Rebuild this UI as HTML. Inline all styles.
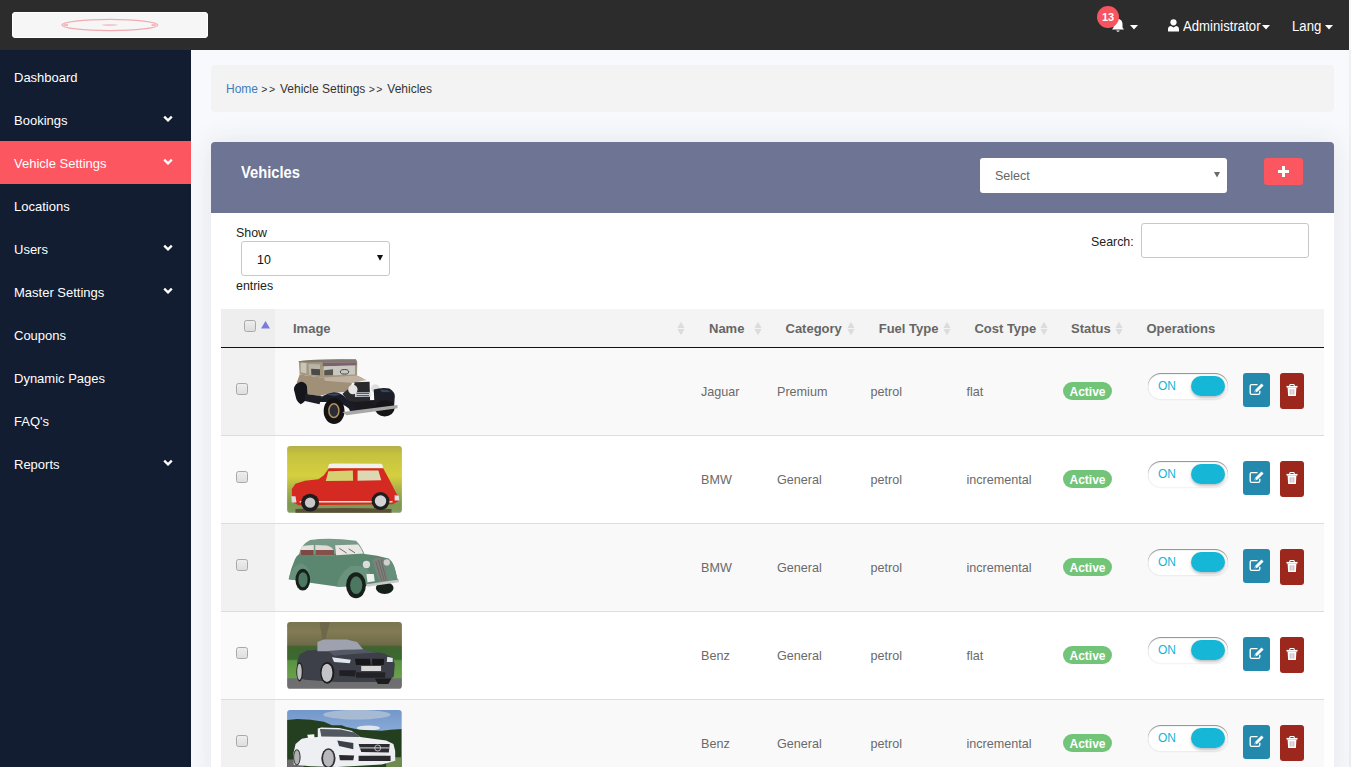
<!DOCTYPE html><html><head><meta charset="utf-8"><style>
*{box-sizing:border-box;margin:0;padding:0}
html,body{width:1351px;height:767px;overflow:hidden;background:#f8f9fc;font-family:"Liberation Sans",sans-serif}
body{position:relative}
.a{position:absolute}
.t{position:absolute;white-space:nowrap;line-height:1}
#strip{left:1349px;top:0;width:2px;height:767px;background:linear-gradient(#f9f9f9 0,#f9f9f9 50px,#eff0f4 50px,#eceef2 100%)}
#top{left:0;top:0;width:1349px;height:50px;background:#2c2c2c}
#logo{left:12px;top:12px;width:196px;height:26px;background:#f6f6f6;border-radius:4px;box-shadow:inset 0 0 0 1px #fff}
#side{left:0;top:50px;width:191px;height:717px;background:#131d31}
.mi{position:absolute;left:0;width:191px;height:43px;line-height:45px;color:#fff;font-size:13px;padding-left:14px;white-space:nowrap}
.mi.act{background:#fc5661}
.chev{position:absolute;left:163px;top:17px}
#crumb{left:211px;top:65px;width:1123px;height:47px;background:#f3f3f3;border-radius:4px}
#panel{left:211px;top:142px;width:1123px;height:640px;background:#fff;border-radius:4px 4px 0 0;box-shadow:0 0 28px rgba(40,50,90,.10)}
#ph{left:0;top:0;width:1123px;height:71px;background:#6e7494;border-radius:4px 4px 0 0}
.cb{position:absolute;width:12px;height:12px;border:1px solid #a8a8a8;border-radius:2.5px;background:linear-gradient(#ededed,#dedede)}
.sort{position:absolute;width:8px;height:15px}
.th{position:absolute;top:322px;font-size:13px;font-weight:bold;color:#666;white-space:nowrap;line-height:1}
.td{position:absolute;font-size:12.6px;color:#6a6a6a;white-space:nowrap;line-height:1}
.badge{position:absolute;left:1063px;width:49px;height:18px;border-radius:9px;background:#72c479;color:#fff;font-weight:bold;font-size:12px;line-height:20px;text-align:center}
.tog{position:absolute;left:1148px;width:80px;height:26px;border-radius:13px;background:#fff;box-shadow:inset 0 1px 1px rgba(0,0,0,.45),0 1px 2px rgba(0,0,0,.06)}
.tog .on{position:absolute;left:10px;top:7px;font-size:12px;color:#17b4d6;line-height:1}
.tog .knob{position:absolute;left:43px;top:3px;width:34px;height:20px;border-radius:10px;background:#15b6d6;box-shadow:0 2px 3px rgba(0,0,0,.25)}
.be{position:absolute;left:1243px;width:27px;height:34px;border-radius:3px;background:#2389ad}
.bd{position:absolute;left:1280px;width:24px;height:36px;border-radius:3px;background:#9c271d}
.img{position:absolute;left:287px;width:115px;height:67px;border-radius:3px;overflow:hidden}
</style></head><body><div id="strip" class="a"></div><div id="top" class="a"><div id="logo" class="a"><svg width="196" height="26" style="position:absolute;left:0;top:0"><ellipse cx="97.8" cy="13" rx="48" ry="5.6" fill="none" stroke="#f3aab0" stroke-width="1.2"/><path d="M50 13 Q52 11.5 56 12 L56 14 Q52 14.5 50 13Z M145.6 13 Q143.6 11.5 139.6 12 L139.6 14 Q143.6 14.5 145.6 13Z" fill="#f5b8bc"/><ellipse cx="97.8" cy="13" rx="8" ry="0.9" fill="#f6c8cc"/></svg></div><svg class="a" style="left:1111px;top:18px" width="14" height="15" viewBox="0 0 14 15"><path d="M7 1 C4 1 2.5 3.5 2.5 6 V9.5 L1 11.5 H13 L11.5 9.5 V6 C11.5 3.5 10 1 7 1Z M5.3 12.5 A1.8 1.8 0 0 0 8.7 12.5Z" fill="#fff"/></svg><div class="a" style="left:1097px;top:6px;width:22px;height:22px;border-radius:11px;background:#f7545f;color:#fff;font-size:11px;font-weight:bold;text-align:center;line-height:22px">13</div><svg class="a" style="left:1130px;top:25px" width="9" height="5"><path d="M0 0 H8 L4 4.5Z" fill="#fff"/></svg><svg class="a" style="left:1168px;top:18.5px" width="11" height="13" viewBox="0 0 11 13"><circle cx="5.5" cy="3.3" r="3.1" fill="#fff"/><path d="M0 12.5 V10 C0 8 1.5 7 3 7 L5.5 8.5 L8 7 C9.5 7 11 8 11 10 V12.5Z" fill="#fff"/></svg><div class="t" style="left:1183px;top:18.5px;font-size:14px;color:#fff;transform:scaleX(0.94);transform-origin:0 0">Administrator</div><svg class="a" style="left:1262px;top:25px" width="9" height="5"><path d="M0 0 H8 L4 4.5Z" fill="#fff"/></svg><div class="t" style="left:1292px;top:18.5px;font-size:14px;color:#fff;transform:scaleX(0.94);transform-origin:0 0">Lang</div><svg class="a" style="left:1325px;top:25px" width="9" height="5"><path d="M0 0 H8 L4 4.5Z" fill="#fff"/></svg></div><div id="side" class="a"><div class="mi" style="top:5px">Dashboard</div><div class="mi" style="top:48px">Bookings<svg class="chev" style="top:17px" width="10" height="8" viewBox="0 0 10 8"><path d="M1.2 1.6 L5 5.4 L8.8 1.6" fill="none" stroke="#fff" stroke-width="2.3"/></svg></div><div class="mi act" style="top:91px">Vehicle Settings<svg class="chev" style="top:17px" width="10" height="8" viewBox="0 0 10 8"><path d="M1.2 1.6 L5 5.4 L8.8 1.6" fill="none" stroke="#fff" stroke-width="2.3"/></svg></div><div class="mi" style="top:134px">Locations</div><div class="mi" style="top:177px">Users<svg class="chev" style="top:17px" width="10" height="8" viewBox="0 0 10 8"><path d="M1.2 1.6 L5 5.4 L8.8 1.6" fill="none" stroke="#fff" stroke-width="2.3"/></svg></div><div class="mi" style="top:220px">Master Settings<svg class="chev" style="top:17px" width="10" height="8" viewBox="0 0 10 8"><path d="M1.2 1.6 L5 5.4 L8.8 1.6" fill="none" stroke="#fff" stroke-width="2.3"/></svg></div><div class="mi" style="top:263px">Coupons</div><div class="mi" style="top:306px">Dynamic Pages</div><div class="mi" style="top:349px">FAQ's</div><div class="mi" style="top:392px">Reports<svg class="chev" style="top:17px" width="10" height="8" viewBox="0 0 10 8"><path d="M1.2 1.6 L5 5.4 L8.8 1.6" fill="none" stroke="#fff" stroke-width="2.3"/></svg></div></div><div id="crumb" class="a"></div><div class="t" style="left:226px;top:83px;font-size:12px;color:#333"><span style="color:#3f7cc0">Home</span> <span style="font-size:10.5px;letter-spacing:1.5px">&gt;&gt;</span> Vehicle Settings <span style="font-size:10.5px;letter-spacing:1.5px">&gt;&gt;</span> Vehicles</div><div id="panel" class="a"><div id="ph" class="a"></div></div><div class="t" style="left:241px;top:165px;font-size:16px;font-weight:bold;color:#fff;transform:scaleX(0.92);transform-origin:0 0">Vehicles</div><div class="a" style="left:980px;top:158px;width:247px;height:35px;background:#fff;border-radius:3px"></div><div class="t" style="left:995px;top:170px;font-size:12.5px;color:#666">Select</div><svg class="a" style="left:1214px;top:172px" width="6" height="6"><path d="M0 0H6L3 5.5Z" fill="#6a6a6a"/></svg><div class="a" style="left:1264px;top:158px;width:39px;height:27px;background:#fc5661;border-radius:3px"></div><svg class="a" style="left:1278px;top:166px" width="11" height="11"><path d="M4 0H7V4H11V7H7V11H4V7H0V4H4Z" fill="#fff"/></svg><div class="t" style="left:236px;top:227px;font-size:12.4px;color:#222">Show</div><div class="a" style="left:241px;top:241px;width:149px;height:35px;background:#fff;border:1px solid #c8c8c8;border-radius:3px"></div><div class="t" style="left:257px;top:254px;font-size:12.4px;color:#111">10</div><svg class="a" style="left:377px;top:255px" width="6" height="6"><path d="M0 0H6L3 5.8Z" fill="#111"/></svg><div class="t" style="left:236px;top:280px;font-size:12.4px;color:#222">entries</div><div class="t" style="left:1091px;top:236px;font-size:12.4px;color:#222">Search:</div><div class="a" style="left:1141px;top:223px;width:168px;height:35px;background:#fff;border:1px solid #c8c8c8;border-radius:3px"></div><div class="a" style="left:221px;top:309px;width:1103px;height:38px;background:#f4f4f4"></div><div class="a" style="left:221px;top:309px;width:54px;height:38px;background:#eeeeee"></div><div class="a" style="left:221px;top:347px;width:1103px;height:1px;background:#111"></div><div class="cb" style="left:244px;top:320px"></div><svg class="a" style="left:261px;top:321px" width="9" height="8"><path d="M4.5 0 L9 7.5 H0Z" fill="#7b7bde"/></svg><div class="th" style="left:293px">Image</div><div class="th" style="left:709px">Name</div><div class="th" style="left:785.5px">Category</div><div class="th" style="left:878.7px">Fuel Type</div><div class="th" style="left:974.4px">Cost Type</div><div class="th" style="left:1071px">Status</div><div class="th" style="left:1146.5px">Operations</div><svg class="sort" style="left:677px;top:321px" width="9" height="15" viewBox="0 0 9 15"><path d="M4.5 0 L8.5 7 H0.5Z M0.5 8 H8.5 L4.5 15Z" fill="#dcdcdc"/></svg><svg class="sort" style="left:753.5px;top:321px" width="9" height="15" viewBox="0 0 9 15"><path d="M4.5 0 L8.5 7 H0.5Z M0.5 8 H8.5 L4.5 15Z" fill="#dcdcdc"/></svg><svg class="sort" style="left:846.5px;top:321px" width="9" height="15" viewBox="0 0 9 15"><path d="M4.5 0 L8.5 7 H0.5Z M0.5 8 H8.5 L4.5 15Z" fill="#dcdcdc"/></svg><svg class="sort" style="left:942.5px;top:321px" width="9" height="15" viewBox="0 0 9 15"><path d="M4.5 0 L8.5 7 H0.5Z M0.5 8 H8.5 L4.5 15Z" fill="#dcdcdc"/></svg><svg class="sort" style="left:1039.5px;top:321px" width="9" height="15" viewBox="0 0 9 15"><path d="M4.5 0 L8.5 7 H0.5Z M0.5 8 H8.5 L4.5 15Z" fill="#dcdcdc"/></svg><svg class="sort" style="left:1114.5px;top:321px" width="9" height="15" viewBox="0 0 9 15"><path d="M4.5 0 L8.5 7 H0.5Z M0.5 8 H8.5 L4.5 15Z" fill="#dcdcdc"/></svg><div class="a" style="left:221px;top:348px;width:1103px;height:87px;background:#f9f9f9"></div><div class="a" style="left:221px;top:348px;width:54px;height:87px;background:#f1f1f1"></div><div class="a" style="left:221px;top:435px;width:1103px;height:1px;background:#dddddd"></div><div class="cb" style="left:236px;top:383px"></div><svg class="a" style="left:284px;top:352px" width="120" height="80.04" viewBox="0 0 1150 767" preserveAspectRatio="none"><path d="M120 300 L150 215 L360 245 L700 225 L760 255 L650 300 L620 380 L450 392 L340 422 L220 402 L200 300Z" fill="#a09078"/><path d="M380 232 L680 220 L792 268 L660 296 L390 276Z" fill="#c0b2a0"/><path d="M142 88 Q300 68 690 74 L702 100 L700 225 L360 246 L150 216Z" fill="#a4957f"/><path d="M140 88 Q300 64 690 70 L700 98 Q400 92 145 100Z" fill="#7d7a70"/><path d="M370 100 L695 100 L695 128 L372 140Z" fill="#7a6272"/><path d="M160 100 L215 105 L215 205 L160 195Z" fill="#c8c4b8"/><path d="M235 115 L345 120 L345 230 L240 220Z" fill="#b8b4a8"/><path d="M260 160 L345 165 L345 225 L262 218Z" fill="#4c4a46"/><path d="M380 136 L680 130 L680 215 L380 228Z" fill="#c8c8c0"/><path d="M385 175 L470 165 L470 222 L385 226Z" fill="#55544e"/><ellipse cx="580" cy="190" rx="40" ry="22" fill="none" stroke="#3a3a36" stroke-width="9"/><path d="M95 360 Q100 295 165 285 Q210 290 220 330 L225 420 Q210 480 160 500 Q120 480 110 420Z" fill="#15161c"/><path d="M200 400 L365 425 L340 500 L200 470Z" fill="#1e1f26"/><path d="M600 470 L880 460 L900 560 L640 590Z" fill="#1a1a1e"/><path d="M560 400 L640 335 L690 300 L690 480 L610 470Z" fill="#2a2a2e"/><path d="M330 480 Q360 400 480 385 Q560 390 600 450 L700 540 L650 565 Q600 520 560 500 Q470 470 400 480Z" fill="#1a1c28"/><path d="M410 410 Q470 390 540 400 Q520 420 470 420Z" fill="#3a4462"/><ellipse cx="480" cy="565" rx="100" ry="125" fill="#131313"/><ellipse cx="478" cy="562" rx="48" ry="66" fill="#2c2c34" stroke="#b09060" stroke-width="14"/><path d="M675 290 L820 285 L825 470 L680 480Z" fill="#2a2a2c"/><path d="M680 385 L830 385 L830 430 L680 432Z" fill="#d0d4dc"/><path d="M695 397 L815 397 M695 418 L815 418" stroke="#445" stroke-width="9"/><circle cx="660" cy="360" r="45" fill="#e4e4e4"/><circle cx="875" cy="350" r="40" fill="#dedede"/><path d="M860 360 Q940 335 1010 350 Q1060 380 1062 420 L1055 520 Q1000 600 930 590 L870 560Z" fill="#1c1e28"/><path d="M920 362 Q990 350 1030 385 Q980 380 940 385Z" fill="#3a4462"/><ellipse cx="965" cy="540" rx="95" ry="78" fill="#151515"/><path d="M560 575 L1088 508 L1088 540 L600 605Z" fill="#a8a8a8"/></svg><div class="td" style="left:701px;top:386px">Jaguar</div><div class="td" style="left:777px;top:386px">Premium</div><div class="td" style="left:870.5px;top:386px">petrol</div><div class="td" style="left:966.5px;top:386px">flat</div><div class="badge" style="top:382px">Active</div><div class="tog" style="top:373px"><span class="on">ON</span><div class="knob"></div></div><div class="be" style="top:373px"><svg class="a" style="left:6px;top:10px" width="16" height="13" viewBox="0 0 16 13"><path d="M8.5 1.6 H2.6 Q1.2 1.6 1.2 3 V9.9 Q1.2 11.3 2.6 11.3 H9.4 Q10.8 11.3 10.8 9.9 V7.8" fill="none" stroke="#fff" stroke-width="1.35"/><path d="M5.4 9.3 L6 6.9 L12.5 0.5 L14.6 2.5 L8.1 8.9Z" fill="#fff"/><circle cx="6.6" cy="8.1" r="0.7" fill="#2389ad"/></svg></div><div class="bd" style="top:373px"><svg class="a" style="left:6px;top:11px" width="12" height="13" viewBox="0 0 12 13"><path d="M3.8 2.2 V1.2 Q3.8 0.5 4.5 0.5 H7.5 Q8.2 0.5 8.2 1.2 V2.2" fill="none" stroke="#fff" stroke-width="1.1"/><rect x="0.5" y="1.9" width="11" height="1.7" fill="#fff"/><path d="M1.6 3.6 H10.4 L9.9 12 H2.1Z" fill="#fff"/><path d="M4.2 5.2 V10.6 M6 5.2 V10.6 M7.8 5.2 V10.6" stroke="#c4aeb8" stroke-width="1"/></svg></div><div class="a" style="left:221px;top:436px;width:1103px;height:87px;background:#ffffff"></div><div class="a" style="left:221px;top:436px;width:54px;height:87px;background:#fafafa"></div><div class="a" style="left:221px;top:523px;width:1103px;height:1px;background:#dddddd"></div><div class="cb" style="left:236px;top:471px"></div><svg class="a" style="left:284px;top:440px" width="120" height="80.04" viewBox="0 0 1150 767" preserveAspectRatio="none"><defs><linearGradient id="g2" x1="0" y1="0" x2="0" y2="1"><stop offset="0" stop-color="#a4a452"/><stop offset="0.18" stop-color="#c6c23e"/><stop offset="0.45" stop-color="#d6cf3e"/><stop offset="0.62" stop-color="#a8b04a"/><stop offset="0.8" stop-color="#7c9a52"/><stop offset="1" stop-color="#8c9a6c"/></linearGradient><clipPath id="c2"><rect x="30" y="58" width="1100" height="640" rx="30"/></clipPath></defs><g clip-path="url(#c2)"><rect x="0" y="0" width="1150" height="767" fill="url(#g2)"/><path d="M110 662 Q560 640 1030 662 L1030 767 L110 767Z" fill="#5a5038"/><path d="M430 232 Q440 225 480 225 L930 228 Q948 232 950 272 L420 272Z" fill="#f2f2ec"/><path d="M75 470 L110 420 L200 390 L330 375 L380 340 L430 270 L950 270 L1010 380 L1060 480 L1092 540 L1100 585 L1040 615 L140 625 L78 592Z" fill="#d52a22"/><path d="M425 300 L660 292 L662 390 L400 392Z" fill="#d6d070"/><path d="M705 292 L905 292 L932 385 L705 390Z" fill="#dcd8b4"/><path d="M150 585 L1040 585 L1040 598 L150 598Z" fill="#e4e0dc"/><circle cx="250" cy="600" r="86" fill="#1e1e1e"/><circle cx="250" cy="600" r="50" fill="#c8c8c8"/><circle cx="925" cy="585" r="86" fill="#1e1e1e"/><circle cx="925" cy="585" r="55" fill="#d4d4d4"/><path d="M70 540 L110 540 L120 600 L75 600Z" fill="#dcdcdc"/><path d="M1060 530 L1100 535 L1105 580 L1060 580Z" fill="#e0e0e0"/></g></svg><div class="td" style="left:701px;top:474px">BMW</div><div class="td" style="left:777px;top:474px">General</div><div class="td" style="left:870.5px;top:474px">petrol</div><div class="td" style="left:966.5px;top:474px">incremental</div><div class="badge" style="top:470px">Active</div><div class="tog" style="top:461px"><span class="on">ON</span><div class="knob"></div></div><div class="be" style="top:461px"><svg class="a" style="left:6px;top:10px" width="16" height="13" viewBox="0 0 16 13"><path d="M8.5 1.6 H2.6 Q1.2 1.6 1.2 3 V9.9 Q1.2 11.3 2.6 11.3 H9.4 Q10.8 11.3 10.8 9.9 V7.8" fill="none" stroke="#fff" stroke-width="1.35"/><path d="M5.4 9.3 L6 6.9 L12.5 0.5 L14.6 2.5 L8.1 8.9Z" fill="#fff"/><circle cx="6.6" cy="8.1" r="0.7" fill="#2389ad"/></svg></div><div class="bd" style="top:461px"><svg class="a" style="left:6px;top:11px" width="12" height="13" viewBox="0 0 12 13"><path d="M3.8 2.2 V1.2 Q3.8 0.5 4.5 0.5 H7.5 Q8.2 0.5 8.2 1.2 V2.2" fill="none" stroke="#fff" stroke-width="1.1"/><rect x="0.5" y="1.9" width="11" height="1.7" fill="#fff"/><path d="M1.6 3.6 H10.4 L9.9 12 H2.1Z" fill="#fff"/><path d="M4.2 5.2 V10.6 M6 5.2 V10.6 M7.8 5.2 V10.6" stroke="#c4aeb8" stroke-width="1"/></svg></div><div class="a" style="left:221px;top:524px;width:1103px;height:87px;background:#f9f9f9"></div><div class="a" style="left:221px;top:524px;width:54px;height:87px;background:#f1f1f1"></div><div class="a" style="left:221px;top:611px;width:1103px;height:1px;background:#dddddd"></div><div class="cb" style="left:236px;top:559px"></div><svg class="a" style="left:284px;top:528px" width="120" height="80.04" viewBox="0 0 1150 767" preserveAspectRatio="none"><path d="M140 262 Q160 160 250 115 Q440 88 690 122 Q740 170 775 258Z" fill="#779a88"/><path d="M45 492 Q60 400 105 300 Q120 262 150 250 L775 250 Q900 262 1000 292 Q1050 330 1065 400 L1085 482 L1100 502 L1000 524 L800 550 L520 564 L250 524 L100 498Z" fill="#5b8670"/><path d="M165 180 Q200 165 285 163 L285 258 L158 258Z" fill="#e6e0de"/><path d="M160 212 L285 212 L285 258 L158 258Z" fill="#7c4a42"/><path d="M300 163 L410 168 Q455 178 478 215 L480 262 L300 262Z" fill="#e0dad8"/><path d="M300 212 L478 212 L480 262 L300 262Z" fill="#84504a"/><path d="M490 165 L710 158 Q740 190 760 245 L500 262Z" fill="#eae6e3"/><path d="M530 195 L600 240 M620 200 L680 238" stroke="#555" stroke-width="8"/><path d="M45 492 Q70 370 160 338 Q225 350 245 440 L250 524 L100 498Z" fill="#67917c"/><ellipse cx="180" cy="495" rx="70" ry="105" fill="#17201b"/><ellipse cx="182" cy="495" rx="44" ry="72" fill="#4c7862"/><path d="M505 562 Q530 430 640 365 Q760 345 820 420 Q840 470 835 500 L800 550Z" fill="#6a937e"/><ellipse cx="690" cy="548" rx="95" ry="125" fill="#17201b"/><ellipse cx="692" cy="548" rx="58" ry="85" fill="#4c7862"/><ellipse cx="965" cy="575" rx="85" ry="58" fill="#16201b"/><path d="M1000 292 Q1050 330 1065 400 L1085 482 L1000 510 L960 300Z" fill="#66907a"/><path d="M850 305 Q900 270 950 300 L1002 512 L920 522 Q880 440 850 305Z" fill="#7f817d"/><path d="M880 320 L935 505 M905 305 L960 505 M930 300 L980 505" stroke="#5e605c" stroke-width="7"/><circle cx="790" cy="350" r="35" fill="#dcdcdc"/><circle cx="985" cy="330" r="30" fill="#d0d0d0"/><path d="M790 440 L860 440 L870 510 L800 520Z" fill="#f0f0f0"/><path d="M790 540 L1100 494 L1100 520 L800 562Z" fill="#c8cac8"/></svg><div class="td" style="left:701px;top:562px">BMW</div><div class="td" style="left:777px;top:562px">General</div><div class="td" style="left:870.5px;top:562px">petrol</div><div class="td" style="left:966.5px;top:562px">incremental</div><div class="badge" style="top:558px">Active</div><div class="tog" style="top:549px"><span class="on">ON</span><div class="knob"></div></div><div class="be" style="top:549px"><svg class="a" style="left:6px;top:10px" width="16" height="13" viewBox="0 0 16 13"><path d="M8.5 1.6 H2.6 Q1.2 1.6 1.2 3 V9.9 Q1.2 11.3 2.6 11.3 H9.4 Q10.8 11.3 10.8 9.9 V7.8" fill="none" stroke="#fff" stroke-width="1.35"/><path d="M5.4 9.3 L6 6.9 L12.5 0.5 L14.6 2.5 L8.1 8.9Z" fill="#fff"/><circle cx="6.6" cy="8.1" r="0.7" fill="#2389ad"/></svg></div><div class="bd" style="top:549px"><svg class="a" style="left:6px;top:11px" width="12" height="13" viewBox="0 0 12 13"><path d="M3.8 2.2 V1.2 Q3.8 0.5 4.5 0.5 H7.5 Q8.2 0.5 8.2 1.2 V2.2" fill="none" stroke="#fff" stroke-width="1.1"/><rect x="0.5" y="1.9" width="11" height="1.7" fill="#fff"/><path d="M1.6 3.6 H10.4 L9.9 12 H2.1Z" fill="#fff"/><path d="M4.2 5.2 V10.6 M6 5.2 V10.6 M7.8 5.2 V10.6" stroke="#c4aeb8" stroke-width="1"/></svg></div><div class="a" style="left:221px;top:612px;width:1103px;height:87px;background:#ffffff"></div><div class="a" style="left:221px;top:612px;width:54px;height:87px;background:#fafafa"></div><div class="a" style="left:221px;top:699px;width:1103px;height:1px;background:#dddddd"></div><div class="cb" style="left:236px;top:647px"></div><svg class="a" style="left:284px;top:616px" width="120" height="80.04" viewBox="0 0 1150 767" preserveAspectRatio="none"><defs><linearGradient id="g4" x1="0" y1="0" x2="0" y2="1"><stop offset="0" stop-color="#74724e"/><stop offset="0.2" stop-color="#827a54"/><stop offset="0.36" stop-color="#6e6a48"/><stop offset="0.385" stop-color="#3f6430"/><stop offset="0.54" stop-color="#3c6a30"/><stop offset="0.56" stop-color="#5a9242"/><stop offset="0.77" stop-color="#68a04a"/><stop offset="0.785" stop-color="#6e6e70"/><stop offset="1" stop-color="#707072"/></linearGradient><clipPath id="c4"><rect x="30" y="58" width="1100" height="640" rx="30"/></clipPath></defs><g clip-path="url(#c4)"><rect x="0" y="0" width="1150" height="767" fill="url(#g4)"/><path d="M340 60 L440 60 L395 230 L370 230Z" fill="#6a6048" opacity="0.7"/><path d="M125 440 L150 370 L220 330 L400 320 L700 320 L800 330 L960 360 L1040 400 L1062 460 L1052 580 L1000 622 L880 632 L500 632 L200 612 L130 592Z" fill="#3d4049"/><path d="M320 250 L380 225 L600 225 L700 250 L760 322 L500 338 L320 338Z" fill="#9ea2ae"/><path d="M420 335 Q600 320 760 322 L900 350 Q700 360 480 380Z" fill="#545864"/><path d="M460 395 L640 420 L630 452 L480 442Z" fill="#dfe6ee"/><path d="M990 390 L1042 402 L1042 440 L985 442Z" fill="#dfe6ee"/><path d="M680 410 L822 410 L832 470 L690 470Z" fill="#18181a"/><path d="M845 410 L960 410 L955 470 L845 470Z" fill="#18181a"/><path d="M740 480 L930 480 L930 526 L740 526Z" fill="#d6d6d6"/><path d="M530 520 L690 520 L680 580 L530 572Z" fill="#202024"/><path d="M690 540 L970 540 L970 592 L690 592Z" fill="#222226"/><ellipse cx="415" cy="545" rx="68" ry="105" fill="#1c1c1e"/><ellipse cx="412" cy="545" rx="52" ry="88" fill="#c4c4c8"/><ellipse cx="150" cy="535" rx="32" ry="92" fill="#222"/><ellipse cx="148" cy="535" rx="22" ry="78" fill="#bdbdc2"/><path d="M870 600 L1030 600 L1000 652 L900 652Z" fill="#1c1c1e"/></g></svg><div class="td" style="left:701px;top:650px">Benz</div><div class="td" style="left:777px;top:650px">General</div><div class="td" style="left:870.5px;top:650px">petrol</div><div class="td" style="left:966.5px;top:650px">flat</div><div class="badge" style="top:646px">Active</div><div class="tog" style="top:637px"><span class="on">ON</span><div class="knob"></div></div><div class="be" style="top:637px"><svg class="a" style="left:6px;top:10px" width="16" height="13" viewBox="0 0 16 13"><path d="M8.5 1.6 H2.6 Q1.2 1.6 1.2 3 V9.9 Q1.2 11.3 2.6 11.3 H9.4 Q10.8 11.3 10.8 9.9 V7.8" fill="none" stroke="#fff" stroke-width="1.35"/><path d="M5.4 9.3 L6 6.9 L12.5 0.5 L14.6 2.5 L8.1 8.9Z" fill="#fff"/><circle cx="6.6" cy="8.1" r="0.7" fill="#2389ad"/></svg></div><div class="bd" style="top:637px"><svg class="a" style="left:6px;top:11px" width="12" height="13" viewBox="0 0 12 13"><path d="M3.8 2.2 V1.2 Q3.8 0.5 4.5 0.5 H7.5 Q8.2 0.5 8.2 1.2 V2.2" fill="none" stroke="#fff" stroke-width="1.1"/><rect x="0.5" y="1.9" width="11" height="1.7" fill="#fff"/><path d="M1.6 3.6 H10.4 L9.9 12 H2.1Z" fill="#fff"/><path d="M4.2 5.2 V10.6 M6 5.2 V10.6 M7.8 5.2 V10.6" stroke="#c4aeb8" stroke-width="1"/></svg></div><div class="a" style="left:221px;top:700px;width:1103px;height:87px;background:#f9f9f9"></div><div class="a" style="left:221px;top:700px;width:54px;height:87px;background:#f1f1f1"></div><div class="a" style="left:221px;top:787px;width:1103px;height:1px;background:#dddddd"></div><div class="cb" style="left:236px;top:735px"></div><svg class="a" style="left:284px;top:704px" width="120" height="63" viewBox="0 0 1351 709" preserveAspectRatio="none"><defs><linearGradient id="g5" x1="0" y1="0" x2="0" y2="1"><stop offset="0" stop-color="#6c92c6"/><stop offset="0.4" stop-color="#86a8d6"/><stop offset="1" stop-color="#9ab8e0"/></linearGradient><clipPath id="c5"><rect x="35" y="68" width="1290" height="800" rx="34"/></clipPath></defs><g clip-path="url(#c5)"><rect x="0" y="0" width="1351" height="709" fill="url(#g5)"/><ellipse cx="820" cy="120" rx="380" ry="55" fill="#b4c2d4" opacity="0.8"/><ellipse cx="950" cy="270" rx="130" ry="28" fill="#dfe6ee"/><path d="M35 180 L150 168 L300 178 L450 200 L540 240 L650 238 L700 258 L850 290 L1100 302 L1200 290 L1325 280 L1325 709 L35 709Z" fill="#243f20"/><path d="M1150 600 L1325 600 L1325 709 L1150 709Z" fill="#6e8a4e"/><path d="M35 625 L220 625 L220 709 L35 709Z" fill="#6c6c6c"/><path d="M105 560 L130 450 L200 390 L260 380 L380 370 L380 275 L420 265 L620 270 L760 300 L860 370 L1000 390 L1150 410 L1232 450 L1252 530 L1252 640 L1100 682 L600 709 L300 700 L110 685Z" fill="#eeeff2"/><path d="M405 282 L640 286 L790 322 L860 372 L420 366Z" fill="#52585f"/><path d="M600 410 L780 440 L780 510 L620 472Z" fill="#3c4049"/><path d="M840 450 L1190 450 L1180 545 L870 540Z" fill="#2c2c30"/><path d="M850 488 L1185 488 L1185 502 L850 502Z" fill="#b8b8bc"/><circle cx="1055" cy="495" r="34" fill="none" stroke="#c8c8cc" stroke-width="10"/><path d="M965 555 L1150 555 L1150 605 L965 605Z" fill="#e6e6e6"/><path d="M620 575 L790 580 L780 632 L630 632Z" fill="#2a2a2e"/><path d="M840 582 L1200 582 L1200 642 L840 642Z" fill="#2a2a2e"/><ellipse cx="500" cy="610" rx="80" ry="112" fill="#303034"/><ellipse cx="500" cy="610" rx="60" ry="95" fill="#b8b8bc"/><ellipse cx="145" cy="600" rx="42" ry="92" fill="#3a3a3e"/><ellipse cx="145" cy="600" rx="30" ry="80" fill="#b0b0b4"/><path d="M262 345 L340 340 L345 392 L272 386Z" fill="#f6f6f6"/></g></svg><div class="td" style="left:701px;top:738px">Benz</div><div class="td" style="left:777px;top:738px">General</div><div class="td" style="left:870.5px;top:738px">petrol</div><div class="td" style="left:966.5px;top:738px">incremental</div><div class="badge" style="top:734px">Active</div><div class="tog" style="top:725px"><span class="on">ON</span><div class="knob"></div></div><div class="be" style="top:725px"><svg class="a" style="left:6px;top:10px" width="16" height="13" viewBox="0 0 16 13"><path d="M8.5 1.6 H2.6 Q1.2 1.6 1.2 3 V9.9 Q1.2 11.3 2.6 11.3 H9.4 Q10.8 11.3 10.8 9.9 V7.8" fill="none" stroke="#fff" stroke-width="1.35"/><path d="M5.4 9.3 L6 6.9 L12.5 0.5 L14.6 2.5 L8.1 8.9Z" fill="#fff"/><circle cx="6.6" cy="8.1" r="0.7" fill="#2389ad"/></svg></div><div class="bd" style="top:725px"><svg class="a" style="left:6px;top:11px" width="12" height="13" viewBox="0 0 12 13"><path d="M3.8 2.2 V1.2 Q3.8 0.5 4.5 0.5 H7.5 Q8.2 0.5 8.2 1.2 V2.2" fill="none" stroke="#fff" stroke-width="1.1"/><rect x="0.5" y="1.9" width="11" height="1.7" fill="#fff"/><path d="M1.6 3.6 H10.4 L9.9 12 H2.1Z" fill="#fff"/><path d="M4.2 5.2 V10.6 M6 5.2 V10.6 M7.8 5.2 V10.6" stroke="#c4aeb8" stroke-width="1"/></svg></div></body></html>
